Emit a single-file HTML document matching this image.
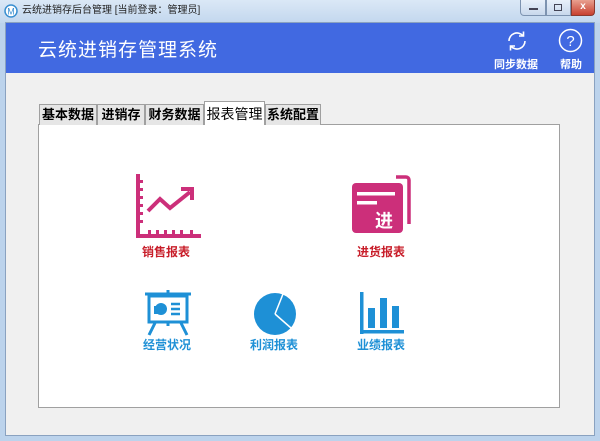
<!DOCTYPE html>
<html><head><meta charset="utf-8"><style>
*{margin:0;padding:0;box-sizing:border-box}
body{width:600px;height:441px;overflow:hidden;background:#bcd3ec;font-family:"Liberation Sans","Noto Sans CJK SC",sans-serif;position:relative}
.abs{position:absolute}
.title{left:0;top:0;width:600px;height:23px;background:linear-gradient(#dbe8f6,#c2d7ee);font-size:10px;color:#222;line-height:22px;padding-left:22px}
.client{left:5px;top:22px;width:590px;height:414px;background:#f0f0f0;border:1px solid #8aa2c0}
.hdr{left:6px;top:23px;width:588px;height:50px;background:#4169e1}
.tab{top:104px;height:21px;font-size:13px;line-height:20px;text-align:center;background:#e6e6e6;border:1px solid #a0a0a0;border-bottom:none;color:#000;font-weight:bold}
.lbl{font-size:12px;font-weight:bold;text-align:center;width:90px}
</style></head><body>
<div class="abs title">云统进销存后台管理 [当前登录：管理员]</div>
<svg class="abs" style="left:4px;top:4px" width="14" height="14"><circle cx="7" cy="7" r="6" fill="#fff" stroke="#3a8fd0" stroke-width="1.5"/><text x="7" y="10.5" font-size="9" fill="#3a8fd0" text-anchor="middle">M</text></svg>
<div class="abs" style="left:520px;top:0;width:26px;height:16px;border:1px solid #7d93b0;border-top:none;border-radius:0 0 0 4px;background:linear-gradient(#e8f0fa,#c8d8ec)"></div>
<div class="abs" style="left:546px;top:0;width:25px;height:16px;border:1px solid #7d93b0;border-top:none;background:linear-gradient(#e8f0fa,#c8d8ec)"></div>
<div class="abs" style="left:571px;top:0;width:24px;height:16px;border:1px solid #8a3a30;border-top:none;border-radius:0 0 4px 0;background:linear-gradient(#e8a090,#c84030);color:#fff;font-size:10px;text-align:center;line-height:14px;font-weight:bold">x</div>
<div class="abs" style="left:529px;top:8px;width:9px;height:2px;background:#445"></div>
<div class="abs" style="left:554px;top:4px;width:8px;height:7px;border:1px solid #445"></div>
<div class="abs client"></div>
<div class="abs hdr"></div>
<div class="abs" style="left:38px;top:35px;font-size:19px;color:#fff;letter-spacing:1px">云统进销存管理系统</div>
<svg class="abs" style="left:505px;top:29px" width="24" height="24" fill="none" stroke="#fff" stroke-width="1.6"><path d="M4 12a8 8 0 0 1 14-5.3M20 12a8 8 0 0 1-14 5.3"/><path d="M18.5 2.5v4.5h-4.5M5.5 21.5v-4.5h4.5"/></svg>
<div class="abs" style="left:494px;top:56px;font-size:11px;color:#fff;font-weight:bold">同步数据</div>
<svg class="abs" style="left:558px;top:28px" width="25" height="25"><circle cx="12.5" cy="12.5" r="11" fill="none" stroke="#fff" stroke-width="1.5"/><text x="12.5" y="18" font-size="15" fill="#fff" text-anchor="middle" font-family="Liberation Sans">?</text></svg>
<div class="abs" style="left:560px;top:56px;font-size:11px;color:#fff;font-weight:bold">帮助</div>
<div class="abs" style="left:38px;top:124px;width:522px;height:284px;background:#fff;border:1px solid #a0a0a0"></div>
<div class="abs tab" style="left:39px;width:58px">基本数据</div>
<div class="abs tab" style="left:97px;width:48px">进销存</div>
<div class="abs tab" style="left:145px;width:59px">财务数据</div>
<div class="abs tab" style="left:204px;top:101px;height:24px;width:61px;background:#fff;line-height:24px;font-weight:normal;font-size:14px">报表管理</div>
<div class="abs tab" style="left:265px;width:56px">系统配置</div>
<svg class="abs" style="left:134px;top:174px" width="68" height="66"><g fill="#cc2f7a"><rect x="2" y="0" width="4" height="64"/><rect x="2" y="60" width="65" height="4"/><rect x="6" y="6" width="3" height="3"/><rect x="6" y="14" width="3" height="3"/><rect x="6" y="22" width="3" height="3"/><rect x="6" y="30" width="3" height="3"/><rect x="6" y="38" width="3" height="3"/><rect x="6" y="46" width="3" height="3"/><rect x="14" y="56" width="3" height="4"/><rect x="22" y="56" width="3" height="4"/><rect x="30" y="56" width="3" height="4"/><rect x="38" y="56" width="3" height="4"/><rect x="46" y="56" width="3" height="4"/><rect x="56" y="56" width="3" height="4"/></g><path d="M14 37l12-12 10 9 20-16" stroke="#cc2f7a" stroke-width="4" fill="none"/><path d="M47 15h11v11" stroke="#cc2f7a" stroke-width="4" fill="none"/></svg>
<div class="abs lbl" style="left:121px;top:243px;color:#c81e2a">销售报表</div>
<svg class="abs" style="left:352px;top:175px" width="60" height="58"><path d="M44 2h10a3 3 0 0 1 3 3v44" stroke="#cc2f7a" stroke-width="3.5" fill="none"/><rect x="0" y="8" width="51" height="50" rx="4" fill="#cc2f7a"/><rect x="5" y="17" width="38" height="3.5" fill="#fff"/><rect x="5" y="26" width="20" height="3.5" fill="#fff"/><text x="32" y="52" font-size="18" font-weight="bold" fill="#fff" text-anchor="middle" font-family="Noto Sans CJK SC">进</text></svg>
<div class="abs lbl" style="left:336px;top:243px;color:#c81e2a">进货报表</div>
<svg class="abs" style="left:145px;top:290px" width="46" height="46" fill="none" stroke="#1e90d6"><path d="M0 4h46M23 0v4" stroke-width="3"/><rect x="4" y="6" width="38" height="26" stroke-width="3"/><path d="M10 33l-6 12M36 33l6 12M23 32v4" stroke-width="3"/><path d="M9 16h8v8h-8z" fill="#1e90d6" stroke="none"/><circle cx="16" cy="19" r="6" fill="#1e90d6" stroke="none"/><path d="M26 14h9M26 19h9M26 24h9" stroke-width="2.5"/></svg>
<div class="abs lbl" style="left:122px;top:336px;color:#1e90d6">经营状况</div>
<svg class="abs" style="left:253px;top:292px" width="44" height="44"><circle cx="22" cy="22" r="21" fill="#1e90d6"/><path d="M22 22L30 2M22 22L38 36" stroke="#fff" stroke-width="1.5"/></svg>
<div class="abs lbl" style="left:229px;top:336px;color:#1e90d6">利润报表</div>
<svg class="abs" style="left:360px;top:292px" width="44" height="42" fill="#1e90d6"><rect x="0" y="0" width="3.5" height="42"/><rect x="0" y="38" width="44" height="3.5"/><rect x="8" y="16" width="7" height="20"/><rect x="20" y="6" width="7" height="30"/><rect x="32" y="14" width="7" height="22"/></svg>
<div class="abs lbl" style="left:336px;top:336px;color:#1e90d6">业绩报表</div>
</body></html>
